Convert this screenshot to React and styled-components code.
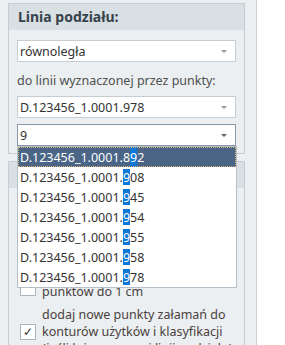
import styled, { createGlobalStyle } from "styled-components";

const GlobalStyle = createGlobalStyle`
    body{
        margin: 0;
        background: #fff;
        font-family: "Noto Sans", "Open Sans", sans-serif;
    }
`;

const options = ["892", "908", "945", "954", "955", "958", "978"];

function Select({ value, focused, children }) {
    return (
        <SelectBox $focused={focused}>
            <span>{value}</span>
            <Arrow $focused={focused} />
            {children}
        </SelectBox>
    );
}

function Option({ suffix, selected }) {
    // the typed "9" is marked inside the point number
    const at = suffix.indexOf("9");
    return (
        <OptionRow $selected={selected}>
            <span>D.123456_1.0001.{suffix.slice(0, at)}</span>
            <Match $full={selected}>9</Match>
            <span>{suffix.slice(at + 1)}</span>
        </OptionRow>
    );
}

function CheckRow({ checked, align, children }) {
    return (
        <CheckLine $align={align}>
            <Box $end={align === "end"}>{checked ? "✓" : ""}</Box>
            <CheckText>{children}</CheckText>
        </CheckLine>
    );
}

export default function App() {
    return (
        <>
            <GlobalStyle />
            <Panel>
                <Group>
                    <GroupHeader>Linia podziału:</GroupHeader>
                    <GroupBody>
                        <Select value="równoległa" />
                        <Label>do linii wyznaczonej przez punkty:</Label>
                        <Select value="D.123456_1.0001.978" />
                        <Select value="9" focused>
                            <DropList>
                                {options.map((o, i) => (
                                    <Option key={o} suffix={o} selected={i === 0} />
                                ))}
                            </DropList>
                        </Select>
                    </GroupBody>
                </Group>
                <Group>
                    <GroupHeader>Opcje:</GroupHeader>
                    <GroupBody $top="15px">
                        <CheckRow checked>usuń punkty nieużywane w innych obiektach</CheckRow>
                        <CheckRow>przelicz pola powierzchni</CheckRow>
                        <CheckRow align="end">zaokrąglij współrzędne nowych punktów do 1 cm</CheckRow>
                        <CheckRow checked>
                            dodaj nowe punkty załamań do konturów użytków i klasyfikacji (jeśli leżą na nowej linii podziału)
                        </CheckRow>
                    </GroupBody>
                </Group>
            </Panel>
        </>
    );
}

let Panel = styled.div`
    width: 257px;
    height: 345px;
    box-sizing: border-box;
    padding: 3px 11px 0 8px;
    background-color: #ebeff1;
    border-right: 1px solid #c9d1d5;
    display: flex;
    flex-direction: column;
    gap: 7px;
    overflow: hidden;
`;

let Group = styled.section`
    border: 1px solid #c4cdd2;
    background-color: #ebeff1;
    flex-shrink: 0;
`;

let GroupHeader = styled.div`
    height: 26px;
    line-height: 26px;
    padding-left: 9px;
    background-color: #d9e0e3;
    color: #36424c;
    font-weight: 700;
    font-size: 14px;
`;

let GroupBody = styled.div`
    display: flex;
    flex-direction: column;
    gap: 6px;
    padding: ${p => p.$top ?? "10px"} 8px 7px 8px;
`;

let SelectBox = styled.div`
    position: relative;
    height: 22px;
    box-sizing: border-box;
    border: 1px solid ${p => (p.$focused ? "#8898a6" : "#c4cdd2")};
    background: #fff;
    display: flex;
    align-items: center;
    padding-left: 2px;
    font-size: 12.5px;
    color: #333;
`;

let Arrow = styled.i`
    position: absolute;
    right: 8px;
    top: 9px;
    border-left: 3px solid transparent;
    border-right: 3px solid transparent;
    border-top: 3px solid ${p => (p.$focused ? "#666" : "#9a9a9a")};
`;

let Label = styled.div`
    font-size: 12.5px;
    color: #4f4f4f;
    line-height: 18px;
    margin-top: 4px;
`;

let DropList = styled.div`
    position: absolute;
    top: calc(100% + 1px);
    left: -1px;
    width: 220px;
    box-sizing: border-box;
    border: 1px solid #b5c0c8;
    background: #fff;
    z-index: 10;
`;

let OptionRow = styled.div`
    display: flex;
    align-items: center;
    height: 20px;
    padding-left: 2px;
    font-size: 12.5px;
    white-space: pre;
    color: ${p => (p.$selected ? "#fff" : "#333")};
    background: ${p => (p.$selected ? "#4a6585" : "transparent")};
    outline: ${p => (p.$selected ? "1px dotted #d8b070" : "none")};
    outline-offset: -1px;
`;

let Match = styled.span`
    align-self: ${p => (p.$full ? "stretch" : "center")};
    height: ${p => (p.$full ? "auto" : "16px")};
    display: flex;
    align-items: center;
    background: #0b78d6;
    color: #fff;
`;

let CheckLine = styled.div`
    display: flex;
    align-items: ${p => (p.$align === "end" ? "flex-end" : "center")};
    gap: 6px;
    padding-left: 3px;
`;

let Box = styled.span`
    flex-shrink: 0;
    width: 14px;
    height: 14px;
    margin-bottom: ${p => (p.$end ? "4px" : "0")};
    border: 1px solid #a9b4bc;
    background: #fff;
    font-size: 12px;
    line-height: 14px;
    text-align: center;
    color: #333;
`;

let CheckText = styled.span`
    font-size: 12.5px;
    line-height: 17px;
    color: #4a3f3f;
`;
